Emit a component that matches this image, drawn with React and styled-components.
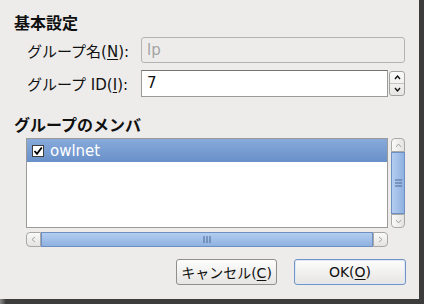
import React from "react";
import styled, { createGlobalStyle } from "styled-components";

const Global = createGlobalStyle`
  html, body {
    margin: 0;
    padding: 0;
    background: #474747;
  }
  body {
    font-family: "DejaVu Sans", "Noto Sans CJK JP", sans-serif;
  }
`;

const Frame = styled.div`
  width: 424px;
  height: 304px;
  background: linear-gradient(90deg, #8a8a8a 0, #3c3c3c 6px);
  box-sizing: border-box;
  padding: 0 5px 5px 0;
`;

const Dialog = styled.div`
  width: 419px;
  height: 299px;
  background: #edeceb;
  box-sizing: border-box;
  padding: 0 14px;
  display: flex;
  flex-direction: column;
  color: #101010;
`;

const Heading = styled.div`
  margin-top: ${(p) => p.$top}px;
  height: 20px;
  line-height: 20px;
  font-size: 16px;
  font-weight: bold;
  font-family: "Noto Sans CJK JP", "DejaVu Sans", sans-serif;
`;

const Form = styled.div`
  margin-top: 5px;
  padding-left: 13px;
  display: grid;
  grid-template-columns: 114px 1fr;
  grid-template-rows: 26px 26px;
  row-gap: 7px;
  align-items: center;
`;

const Label = styled.label`
  font-size: 15px;
  font-family: "DejaVu Sans", "Noto Sans CJK JP", sans-serif;
  u {
    text-decoration: underline;
    text-underline-offset: 2px;
  }
`;

const Field = styled.div`
  height: 26px;
  box-sizing: border-box;
  border: 1px solid ${(p) => (p.$disabled ? "#b3b3b1" : "#9a9a98")};
  border-top-color: ${(p) => (p.$disabled ? "#b3b3b1" : "#747474")};
  border-radius: ${(p) => (p.$disabled ? "3px" : "0")};
  background: ${(p) => (p.$disabled ? "#edeceb" : "#ffffff")};
  color: ${(p) => (p.$disabled ? "#a3a3a3" : "#101010")};
  font-size: 15px;
  line-height: 24px;
  padding-left: 5px;
  flex: 1;
`;

const SpinRow = styled.div`
  display: flex;
  gap: 1px;
  align-items: stretch;
`;

const Spin = styled.div`
  width: 16px;
  height: 25px;
  margin-top: 1px;
  box-sizing: border-box;
  border: 1px solid #a2a2a0;
  border-radius: 3px;
  background: linear-gradient(#fbfbfb, #e7e6e4);
  display: flex;
  flex-direction: column;
  div {
    flex: 1;
    display: flex;
    align-items: center;
    justify-content: center;
  }
  div + div {
    border-top: 1px solid #c4c4c2;
  }
`;

const ListRow = styled.div`
  margin-top: 4px;
  padding-left: 12px;
  display: flex;
  gap: 3px;
  height: 90px;
`;

const List = styled.div`
  flex: 1;
  box-sizing: border-box;
  border: 1px solid #9b9b99;
  background: #ffffff;
`;

const Item = styled.div`
  height: 23px;
  display: flex;
  align-items: center;
  padding-left: 5px;
  gap: 6px;
  color: #ffffff;
  font-size: 15px;
  background: ${(p) =>
    p.$selected ? "linear-gradient(#88aadb, #6890c9)" : "transparent"};
`;

const Check = styled.span`
  width: 12px;
  height: 12px;
  box-sizing: border-box;
  border: 1px solid #3e3e3e;
  background: #ffffff;
  display: flex;
  align-items: center;
  justify-content: center;
`;

const VScroll = styled.div`
  width: 14px;
  display: flex;
  flex-direction: column;
`;

const HScroll = styled.div`
  margin-top: 4px;
  margin-left: 12px;
  margin-right: 17px;
  height: 15px;
  display: flex;
`;

const Stepper = styled.div`
  ${(p) => (p.$vertical ? "height: 14px;" : "width: 15px;")}
  box-sizing: border-box;
  border: 1px solid #a8a8a6;
  border-radius: ${(p) => p.$radius};
  background: linear-gradient(${(p) => (p.$vertical ? "90deg" : "180deg")}, #fafafa, #e4e3e1);
  display: flex;
  align-items: center;
  justify-content: center;
  flex-shrink: 0;
`;

const Thumb = styled.div`
  flex: 1;
  box-sizing: border-box;
  border: 1px solid #6d8fc2;
  background: linear-gradient(
    ${(p) => (p.$vertical ? "90deg" : "180deg")},
    #b3cdf0,
    #8fb1e0
  );
  display: flex;
  align-items: center;
  justify-content: center;
`;

const Buttons = styled.div`
  margin-top: 12px;
  margin-right: -1px;
  display: flex;
  justify-content: flex-end;
  gap: 17px;
`;

const Button = styled.button`
  width: ${(p) => p.$w}px;
  height: 26px;
  box-sizing: border-box;
  border: 1px solid ${(p) => (p.$default ? "#7193c6" : "#8f8f8d")};
  border-radius: 3px;
  background: linear-gradient(#fdfdfd, #e6e5e3);
  box-shadow: ${(p) => (p.$default ? "inset 0 0 0 1px #dfe8f5" : "none")};
  font-family: "DejaVu Sans", "Noto Sans CJK JP", sans-serif;
  font-size: 14px;
  color: #101010;
  padding: 0;
  u {
    text-underline-offset: 2px;
  }
`;

const Chevron = ({ dir, color = "#a4a4a4", width = 1, size = 7 }) => {
  const pts = {
    up: "1,5 3.5,2 6,5",
    down: "1,2 3.5,5 6,2",
    left: "5,1 2,3.5 5,6",
    right: "2,1 5,3.5 2,6",
  }[dir];
  return (
    <svg width={size} height={size} viewBox="0 0 7 7">
      <polyline points={pts} fill="none" stroke={color} strokeWidth={width} />
    </svg>
  );
};

const Grip = ({ vertical }) => (
  <svg width={vertical ? 7 : 8} height={vertical ? 8 : 7} viewBox={vertical ? "0 0 7 8" : "0 0 8 7"}>
    {[0.5, 3.5, 6.5].map((v) =>
      vertical ? (
        <line key={v} x1="0" x2="7" y1={v + 0.5} y2={v + 0.5} stroke="#4a6896" />
      ) : (
        <line key={v} y1="0" y2="7" x1={v + 0.5} x2={v + 0.5} stroke="#4a6896" />
      )
    )}
  </svg>
);

export default function App() {
  return (
    <Frame>
      <Global />
      <Dialog>
        <Heading $top={12}>基本設定</Heading>
        <Form>
          <Label>
            グループ名(<u>N</u>):
          </Label>
          <Field $disabled>lp</Field>
          <Label>
            グループ ID(<u>I</u>):
          </Label>
          <SpinRow>
            <Field style={{ height: 27 }}>7</Field>
            <Spin>
              <div>
                <Chevron dir="up" color="#111" width={1.4} />
              </div>
              <div>
                <Chevron dir="down" color="#111" width={1.4} />
              </div>
            </Spin>
          </SpinRow>
        </Form>
        <Heading $top={18}>グループのメンバ</Heading>
        <ListRow>
          <List>
            <Item $selected>
              <Check>
                <svg width="10" height="10" viewBox="0 0 10 10">
                  <polyline
                    points="1.5,5 4,7.8 8.8,1.5"
                    fill="none"
                    stroke="#000"
                    strokeWidth="1.8"
                  />
                </svg>
              </Check>
              owlnet
            </Item>
          </List>
          <VScroll>
            <Stepper $vertical $radius="4px 4px 0 0">
              <Chevron dir="up" />
            </Stepper>
            <Thumb $vertical>
              <Grip vertical />
            </Thumb>
            <Stepper $vertical $radius="0 0 4px 4px">
              <Chevron dir="down" />
            </Stepper>
          </VScroll>
        </ListRow>
        <HScroll>
          <Stepper $radius="4px 0 0 4px">
            <Chevron dir="left" />
          </Stepper>
          <Thumb>
            <Grip />
          </Thumb>
          <Stepper $radius="0 4px 4px 0">
            <Chevron dir="right" />
          </Stepper>
        </HScroll>
        <Buttons>
          <Button $w={101}>
            キャンセル(<u>C</u>)
          </Button>
          <Button $w={112} $default>
            OK(<u>O</u>)
          </Button>
        </Buttons>
      </Dialog>
    </Frame>
  );
}
